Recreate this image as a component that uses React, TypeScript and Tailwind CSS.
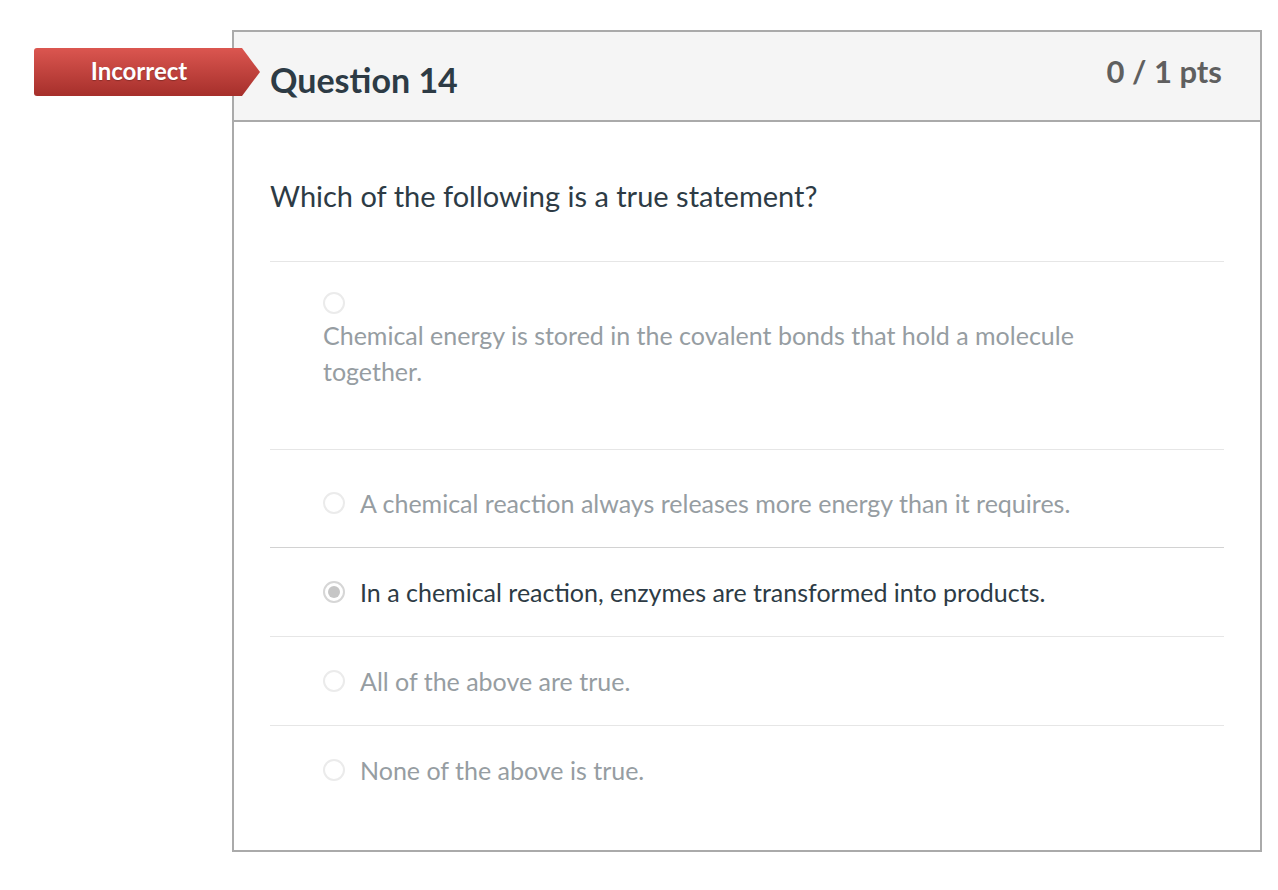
const answers = [
  {
    text: 'Chemical energy is stored in the covalent bonds that hold a molecule together.',
    stacked: true,
    pad: 'pt-[30px] pb-[60px]',
  },
  { text: 'A chemical reaction always releases more energy than it requires.', pad: 'pt-[35px] pb-[26px]' },
  {
    text: 'In a chemical reaction, enzymes are transformed into products.',
    selected: true,
    pad: 'py-[26px]',
  },
  { text: 'All of the above are true.', pad: 'py-[26px]' },
  { text: 'None of the above is true.', pad: 'py-[26px]' },
];

const Radio = ({ selected }: { selected?: boolean }) => {
  if (selected) {
    return (
      <span className="flex h-[22px] w-[22px] shrink-0 items-center justify-center rounded-full border-2 border-[#d6d6d6] bg-white">
        <span className="h-[12px] w-[12px] rounded-full bg-[#c6c6c6]" />
      </span>
    );
  }
  return <span className="block h-[22px] w-[22px] shrink-0 rounded-full border-2 border-[#ebebeb] bg-white" />;
};

const App = () => {
  return (
    <div className="relative min-h-[890px] bg-white pl-[232px] pt-[30px] font-['Lato',sans-serif]">
      <div
        className="
          absolute
          left-[34px]
          top-[48px]
          flex
          h-[48px]
          w-[226px]
          items-center
          bg-gradient-to-b
          from-[#db5650]
          to-[#a62f2b]
          [clip-path:path('M3,0_H208_L226,24_L208,48_H3_Q0,48,0,45_V3_Q0,0,3,0Z')]
        "
      >
        <span className="w-[210px] pb-[3px] text-center text-[24px] font-bold text-white [text-shadow:0_1px_1px_rgba(0,0,0,0.25)]">
          Incorrect
        </span>
      </div>

      <div className="w-[1030px] border-2 border-[#aaaaaa]">
        <div className="flex h-[90px] justify-between border-b-2 border-[#aaaaaa] bg-[#f5f5f5] pl-[36px] pr-[38px]">
          <h2 className="pt-[28px] text-[34px] font-bold leading-[40px] text-[#2d3b45]">Question 14</h2>
          <div className="pt-[19px] text-[31px] font-bold leading-[40px] text-[#5f5f5f]">0 / 1 pts</div>
        </div>

        <div className="px-[36px] pb-[36px]">
          <p className="pb-[47px] pt-[56px] text-[29px] leading-[36px] text-[#2d3b45]">
            Which of the following is a true statement?
          </p>

          {answers.map((answer, i) => (
            <div
              key={i}
              className={`border-t ${answer.selected ? 'border-[#d2d2d2]' : 'border-[#e6e6e6]'} ${answer.pad}`}
            >
              {answer.stacked ? (
                <div className="pl-[53px]">
                  <Radio />
                  <div className="mt-[3px] max-w-[800px] text-[25px] leading-[36px] text-[#969da2]">
                    {answer.text}
                  </div>
                </div>
              ) : (
                <div className="flex items-center gap-[15px] pl-[53px]">
                  <Radio selected={answer.selected} />
                  <span
                    className={`text-[25px] leading-[36px] ${
                      answer.selected ? 'text-[#2d3b45]' : 'text-[#969da2]'
                    }`}
                  >
                    {answer.text}
                  </span>
                </div>
              )}
            </div>
          ))}
        </div>
      </div>
    </div>
  );
};

export default App;
